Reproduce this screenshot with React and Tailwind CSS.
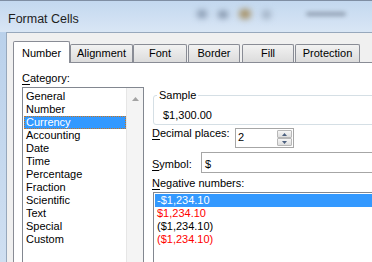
import React from "react";

// Format Cells dialog, Number tab (Windows 7 look)
const categories = [
  "General",
  "Number",
  "Currency",
  "Accounting",
  "Date",
  "Time",
  "Percentage",
  "Fraction",
  "Scientific",
  "Text",
  "Special",
  "Custom",
];

const negatives = [
  { text: "-$1,234.10", color: "text-white", selected: true },
  { text: "$1,234.10", color: "text-[#ff0000]" },
  { text: "($1,234.10)", color: "text-black" },
  { text: "($1,234.10)", color: "text-[#ff0000]" },
];

const tabs = [
  { name: "Number", w: "w-[57px]", gap: "mr-0" },
  { name: "Alignment", w: "w-[63px]", gap: "mr-0" },
  { name: "Font", w: "w-[54px]", gap: "mr-[1px]" },
  { name: "Border", w: "w-[52px]", gap: "mr-[2px]" },
  { name: "Fill", w: "w-[52px]", gap: "mr-[1px]" },
  { name: "Protection", w: "w-[65px]", gap: "mr-0" },
];

const Tab = ({ tab, active }) => {
  if (active) {
    return (
      <div
        className={`${tab.w} ${tab.gap} h-[22px] -mb-px relative z-10 bg-white border border-b-0 border-[#898c95] rounded-t-[2px] pt-[5px] leading-[13px] text-center`}
      >
        {tab.name}
      </div>
    );
  }
  return (
    <div
      className={`${tab.w} ${tab.gap} h-[18px] bg-linear-to-b from-[#f2f2f2] to-[#dcdcdc] border border-b-0 border-[#898c95] rounded-t-[2px] pt-[2px] leading-[13px] text-center`}
    >
      {tab.name}
    </div>
  );
};

const SpinButtons = () => (
  <div className="flex flex-col w-[15px] ml-auto mr-[1px] mt-[1px] gap-0">
    <div className="h-[8px] flex items-center justify-center bg-linear-to-b from-[#f6f6f6] to-[#dedede] border border-[#b8b8b8] rounded-[1px]">
      <svg width="5" height="3" viewBox="0 0 5 3">
        <path d="M0 3 L2.5 0 L5 3 Z" fill="#4c607f" />
      </svg>
    </div>
    <div className="h-[8px] flex items-center justify-center bg-linear-to-b from-[#f6f6f6] to-[#dedede] border border-[#b8b8b8] rounded-[1px]">
      <svg width="5" height="3" viewBox="0 0 5 3">
        <path d="M0 0 L5 0 L2.5 3 Z" fill="#4c607f" />
      </svg>
    </div>
  </div>
);

export default function App() {
  return (
    <div className="w-[372px] h-[262px] overflow-hidden flex flex-col bg-linear-to-b from-[#b7cfea] to-[#cfdff1] border-t border-[#7f8ea3] font-['Liberation_Sans',Arial,sans-serif] text-[11px] text-black">
      {/* title bar */}
      <div className="h-[31px] shrink-0 flex items-start bg-linear-to-b from-[#c3d8ef] to-[#d9e6f5]">
        <div className="pl-[8px] pt-[11px] text-[12.5px] leading-[14px] text-[#1e1e1e]">
          Format Cells
        </div>
        <div className="flex items-center gap-[11px] ml-[118px] mt-[8px]">
          <div className="w-[10px] h-[8px] rounded-full bg-[#8496ad] blur-[3px]" />
          <div className="w-[10px] h-[7px] rounded-full bg-[#7a8ba2] blur-[3px]" />
          <div className="w-[12px] h-[10px] rounded-full bg-[#a69165] blur-[3px]" />
          <div className="w-[9px] h-[9px] rounded-full bg-[#9dadc0] blur-[3px]" />
          <div className="w-[40px] h-[4px] ml-[24px] rounded-full bg-[#8f9db0] blur-[2px]" />
        </div>
      </div>

      {/* client area */}
      <div className="flex-1 ml-[6px] w-[400px] bg-[#f0f0f0] border-l border-t border-[#97a8bc] pl-[6px] pt-[8px] flex flex-col">
        <div className="h-[21px] flex items-end shrink-0">
          {tabs.map((t, i) => (
            <Tab key={t.name} tab={t} active={i === 0} />
          ))}
        </div>

        <div className="flex-1 w-[400px] bg-white border border-[#898c95] flex">
          {/* category column */}
          <div className="pl-[8px] pt-[9px] flex flex-col">
            <div className="leading-[13px]">
              <span className="underline underline-offset-[2px]">C</span>ategory:
            </div>
            <div className="mt-[2px] w-[122px] h-[200px] border border-[#828790] flex">
              <div className="w-[103px] pt-[2px] flex flex-col">
                {categories.map((c) => (
                  <div
                    key={c}
                    className={
                      c === "Currency"
                        ? "ml-[1px] h-[13px] leading-[13px] pl-[2px] bg-[#3399ff] text-white outline-1 outline-dotted outline-[#c8741e] -outline-offset-1"
                        : "h-[13px] leading-[13px] pl-[3px]"
                    }
                  >
                    {c}
                  </div>
                ))}
              </div>
              <div className="w-[17px] bg-[#f4f4f4] border-l border-[#e6e6e6] flex flex-col items-center pt-[9px]">
                <svg width="7" height="4" viewBox="0 0 7 4">
                  <path d="M0 4 L3.5 0 L7 4 Z" fill="#a3a3a3" />
                </svg>
              </div>
            </div>
          </div>

          {/* format options */}
          <div className="ml-[8px] pt-[26px] flex flex-col">
            <fieldset className="ml-[1px] w-[240px] border border-[#d5dfe5] rounded-[3px] pl-[9px] pb-[2px]">
              <legend className="ml-[-6px] px-[2px] leading-[13px]">Sample</legend>
              <div className="pt-[7px] leading-[13px]">$1,300.00</div>
            </fieldset>

            <div className="mt-[3px] flex items-start">
              <div className="w-[83px] leading-[13px] -mt-[1px]">
                <span className="underline underline-offset-[2px]">D</span>ecimal places:
              </div>
              <div className="w-[59px] h-[20px] border border-[#a6a6a6] flex">
                <div className="pl-[2px] pt-[2px] leading-[13px]">2</div>
                <SpinButtons />
              </div>
            </div>

            <div className="mt-[4px] flex items-start">
              <div className="w-[49px] leading-[13px] mt-[6px]">
                <span className="underline underline-offset-[2px]">S</span>ymbol:
              </div>
              <div className="w-[200px] h-[21px] border border-[#a6a6a6] pl-[3px] pt-[5px] leading-[13px]">
                $
              </div>
            </div>

            <div className="mt-[4px] leading-[13px]">
              <span className="underline underline-offset-[2px]">N</span>egative numbers:
            </div>
            <div className="mt-[2px] ml-[1px] w-[240px] h-[80px] border border-[#828790] pt-[1px] flex flex-col">
              {negatives.map((n, i) => (
                <div
                  key={i}
                  className={`h-[13px] leading-[13px] ${n.color} ${
                    n.selected ? "ml-[1px] pl-[2px] bg-[#3399ff]" : "pl-[3px]"
                  }`}
                >
                  {n.text}
                </div>
              ))}
            </div>
          </div>
        </div>
      </div>
    </div>
  );
}
